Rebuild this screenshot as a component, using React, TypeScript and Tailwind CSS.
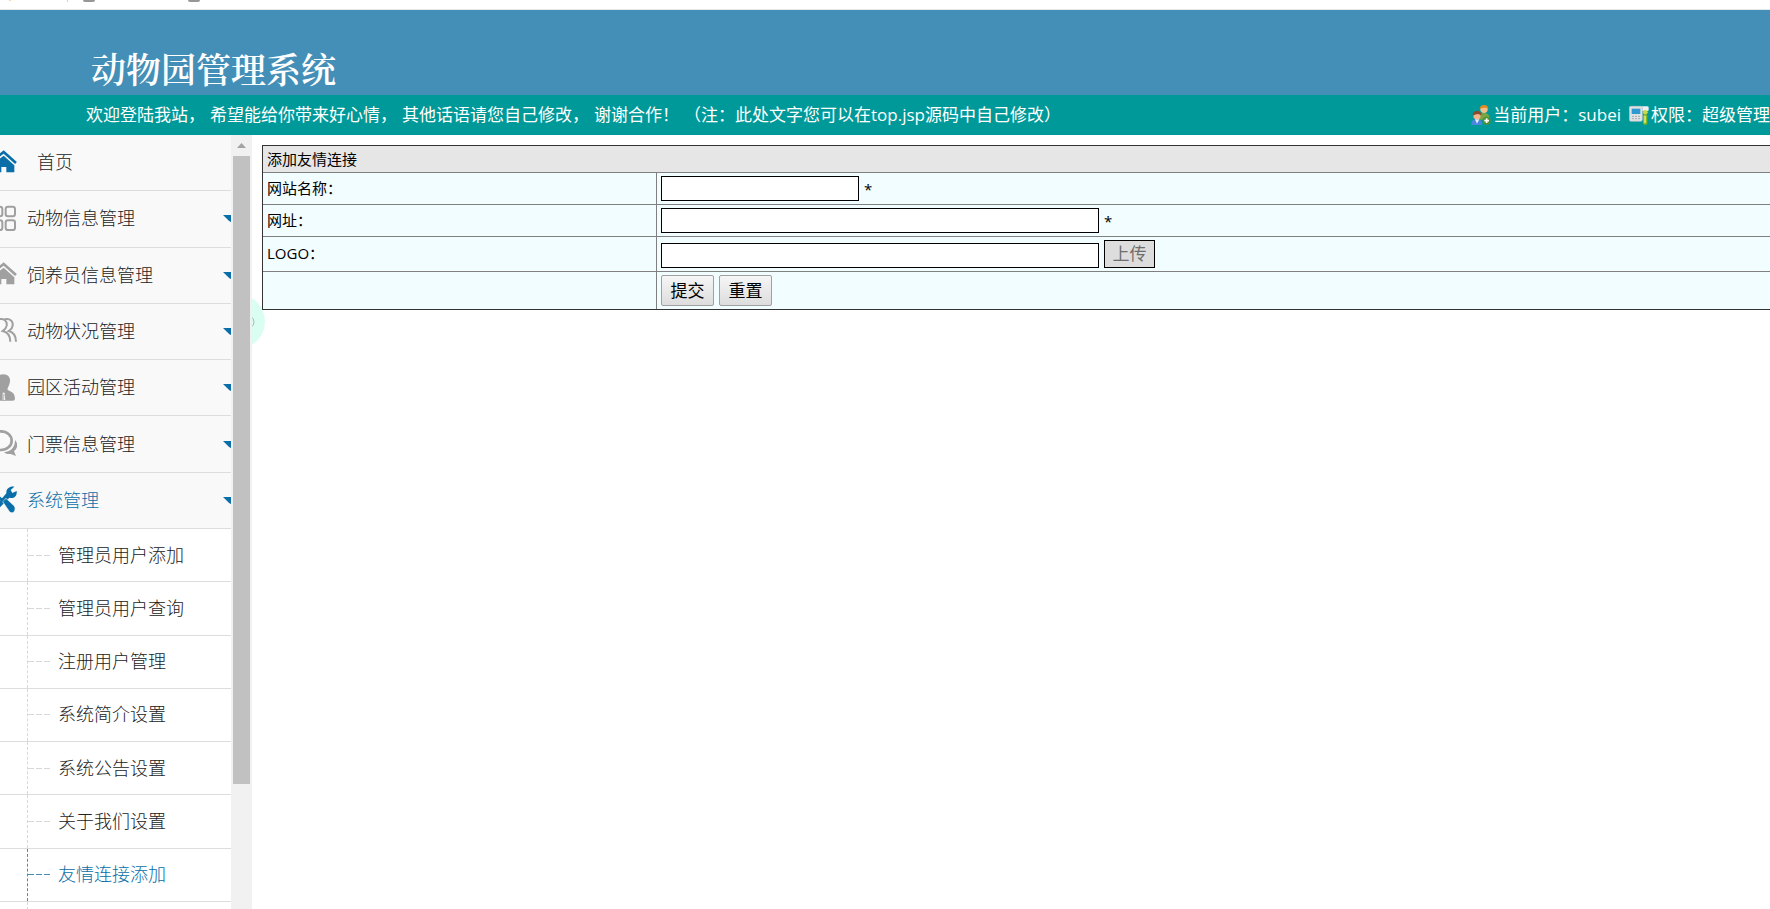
import React from "react";

const HomeIcon = ({ color }: { color: string }) => (
  <svg width="17" height="28" viewBox="0 0 51 84" className="shrink-0" aria-hidden="true">
    <path d="M-3 20L11 9L48 42" fill="none" stroke={color} strokeWidth="8" />
    <path d="M-3 31L11 20L43 49V70H19V54H4V70H-3Z" fill={color} />
  </svg>
);

const GridIcon = () => (
  <svg width="17" height="28" viewBox="0 0 51 84" className="shrink-0" aria-hidden="true">
    <g fill="none" stroke="#a0a0a0" strokeWidth="6">
      <rect x="17" y="5" width="28" height="29" rx="7" />
      <rect x="17" y="46" width="28" height="29" rx="7" />
      <rect x="-21" y="5" width="28" height="29" rx="7" />
      <rect x="-21" y="46" width="28" height="29" rx="7" />
    </g>
  </svg>
);

const PeopleIcon = () => (
  <svg width="17" height="28" viewBox="0 0 51 84" className="shrink-0" aria-hidden="true">
    <g fill="none" stroke="#a0a0a0" strokeWidth="6">
      <path d="M14 7C31 3 40 14 38 26C37 36 31 38 26 42C42 46 48 58 48 74" />
      <path d="M-4 7C12 3 22 12 20 26C18 36 13 38 8 42C25 46 31 58 31 74" />
    </g>
  </svg>
);

const PersonIcon = () => (
  <svg width="17" height="28" viewBox="0 0 51 84" className="shrink-0" aria-hidden="true">
    <path d="M0 2C20 -4 32 8 30 22C29 34 24 38 22 46C26 54 44 50 45 74Q45 80 38 80H0Z" fill="#a0a0a0" />
    <path d="M8 56H14V62L16 78H8Z" fill="#f9f9f9" />
    <path d="M11 60V80" stroke="#a0a0a0" strokeWidth="2" />
  </svg>
);

const ChatIcon = () => (
  <svg width="17" height="28" viewBox="0 0 51 84" className="shrink-0" aria-hidden="true">
    <ellipse cx="3" cy="32" rx="32" ry="28" fill="none" stroke="#a0a0a0" strokeWidth="8" />
    <path d="M45 30C56 42 52 56 42 64L48 78L32 72C22 73 16 71 12 67C34 64 45 52 45 30Z" fill="#a0a0a0" />
  </svg>
);

const ToolsIcon = () => (
  <svg width="17" height="28" viewBox="0 0 51 84" className="shrink-0" aria-hidden="true">
    <g fill="#0a6ea8">
      <path d="M19 22C18 8 29 0 43 2L32 12L37 21L50 15C52 30 41 39 28 35L0 64V44Z" />
      <path d="M8 47L18 37L43 60C50 72 40 86 29 78Z" stroke="#f9f9f9" strokeWidth="2" />
      <path d="M-2 30L12 42L6 46L-2 40Z" />
    </g>
  </svg>
);

const Caret = () => (
  <svg width="8" height="7" viewBox="0 0 24 21" className="ml-auto shrink-0" aria-hidden="true">
    <path d="M0 0H24V21Q18 19 13 13Z" fill="#0a6ea8" />
  </svg>
);

const UsersIcon = () => (
  <svg width="20" height="20" viewBox="0 0 60 60" className="shrink-0" aria-hidden="true">
    <path d="M24 40Q24 24 40 24Q56 24 57 44H24Z" fill="#79a843" />
    <circle cx="39" cy="13" r="11" fill="#f3bf8c" />
    <path d="M26 12Q27 0 39 0Q52 0 52 12Q44 4 26 12Z" fill="#e08a1e" />
    <path d="M1 60Q0 42 18 42Q34 42 34 60Z" fill="#4a86dd" />
    <path d="M12 43L18 56L25 43Z" fill="#e8f0fc" />
    <circle cx="18" cy="32" r="11" fill="#f0b58a" />
    <path d="M5 32Q5 18 18 18Q32 18 31 32Q22 22 5 32Z" fill="#8a4a2c" />
    <circle cx="47" cy="47" r="12" fill="#4f8f35" />
    <path d="M47 40V54M40 47H54" stroke="#fff" strokeWidth="5" />
  </svg>
);

const DeviceIcon = () => (
  <svg width="20" height="20" viewBox="0 0 60 60" className="shrink-0" aria-hidden="true">
    <rect x="1" y="4" width="58" height="14" rx="4" fill="#eef0f2" />
    <rect x="1" y="4" width="39" height="45" rx="5" fill="#dfe2e5" stroke="#b5babf" strokeWidth="2" />
    <rect x="8" y="11" width="26" height="16" fill="#2d9bd0" />
    <path d="M9 34H33M9 41H33" stroke="#a6abb0" strokeWidth="3" strokeDasharray="6 3" />
    <circle cx="49" cy="22" r="7" fill="#c9d84a" />
    <rect x="42" y="28" width="13" height="31" rx="5" fill="#86b71b" />
    <path d="M48 32V54" stroke="#e8f49a" strokeWidth="4" />
  </svg>
);

const sections = [
  { label: "动物信息管理", icon: <GridIcon /> },
  { label: "饲养员信息管理", icon: <HomeIcon color="#a0a0a0" /> },
  { label: "动物状况管理", icon: <PeopleIcon /> },
  { label: "园区活动管理", icon: <PersonIcon /> },
  { label: "门票信息管理", icon: <ChatIcon /> },
  { label: "系统管理", icon: <ToolsIcon />, active: true },
];

const links = [
  { label: "管理员用户添加" },
  { label: "管理员用户查询" },
  { label: "注册用户管理" },
  { label: "系统简介设置" },
  { label: "系统公告设置" },
  { label: "关于我们设置" },
  { label: "友情连接添加", active: true },
];

const notice = [
  "欢迎登陆我站，",
  "希望能给你带来好心情，",
  "其他话语请您自己修改，",
  "谢谢合作！",
  "（注：此处文字您可以在top.jsp源码中自己修改）",
];

function Header() {
  return (
    <header className="shrink-0">
      <div className="flex h-[10px] items-start border-b border-[#e4e8ea] bg-white">
        <span className="ml-[9px] h-px w-[2px] bg-[#ffd9a8]" />
        <span className="ml-[56px] h-[2px] w-px bg-[#d0d0d0]" />
        <span className="ml-[15px] h-[2px] w-3 rounded-b-sm bg-[#979797]" />
        <span className="ml-[93px] h-[2px] w-3 rounded-b-sm bg-[#979797]" />
      </div>
      <div className="flex h-[85px] items-end bg-[#438fb8] pb-1 pl-[91px]">
        <h1 className="font-['Noto_Serif_CJK_SC','Noto_Sans_CJK_SC',serif] text-[35px] leading-[46px] font-semibold text-white">
          动物园管理系统
        </h1>
      </div>
      <div className="flex h-10 items-center justify-between overflow-hidden bg-[#009999] pl-[86px] text-[17px] whitespace-nowrap text-white">
        <p className="flex gap-[5px]">
          {notice.map((part) => (
            <span key={part}>{part}</span>
          ))}
        </p>
        <div className="flex shrink-0 items-center gap-2">
          <span className="flex items-center gap-[2px]">
            <UsersIcon />
            当前用户：subei
          </span>
          <span className="flex items-center gap-[2px]">
            <DeviceIcon />
            权限：超级管理
          </span>
        </div>
      </div>
    </header>
  );
}

function Sidebar() {
  return (
    <aside className="relative z-10 flex w-[252px] shrink-0 overflow-hidden bg-white">
      <nav className="min-w-0 flex-1 text-[18px] font-light text-[#222]">
        <ul className="grid h-[394px] auto-rows-fr bg-[#f9f9f9]">
          <li className="border-b border-[#ddd]">
            <a href="#home" className="flex h-full items-center gap-5">
              <HomeIcon color="#0a6ea8" />
              首页
            </a>
          </li>
          {sections.map((s) => (
            <li key={s.label} className="border-b border-[#ddd]">
              <button
                type="button"
                aria-expanded={!!s.active}
                className={
                  s.active
                    ? "flex h-full w-full items-center gap-[10px] text-left text-[#0a6ea8]"
                    : "flex h-full w-full items-center gap-[10px] text-left"
                }
              >
                {s.icon}
                {s.label}
                <Caret />
              </button>
            </li>
          ))}
        </ul>
        <ul className="grid h-[373px] auto-rows-fr">
          {links.map((l) => (
            <li key={l.label} className="border-b border-[#ddd] pl-[27px]">
              <a
                href="#link"
                className={
                  l.active
                    ? "flex h-full items-center gap-2 border-l border-dashed border-[#438fb8] text-[#0a6ea8]"
                    : "flex h-full items-center gap-2 border-l border-dashed border-[#d8d8d8]"
                }
              >
                <svg
                  width="22"
                  height="1"
                  viewBox="0 0 22 1"
                  className={l.active ? "shrink-0 text-[#438fb8]" : "shrink-0 text-[#d8d8d8]"}
                  aria-hidden="true"
                >
                  <path d="M0 0H6V1H0ZM8 0H14V1H8ZM16 0H22V1H16Z" fill="currentColor" />
                </svg>
                {l.label}
              </a>
            </li>
          ))}
        </ul>
        <div className="ml-[27px] h-[53px] border-l border-dashed border-[#d8d8d8]" />
      </nav>
      <div className="flex w-[21px] flex-col bg-[#f1f1f1] px-[2px]" aria-hidden="true">
        <div className="flex h-[21px] items-center justify-center">
          <svg width="9" height="5" viewBox="0 0 9 5">
            <path d="M4.500 0L9 5H0Z" fill="#a3a3a3" />
          </svg>
        </div>
        <div className="h-[628px] bg-[#c1c1c1]" />
      </div>
    </aside>
  );
}

const labelCell = "w-[394px] border-r border-b border-[#808080] px-1 pb-[2px] text-left font-normal";
const fieldCell = "border-b border-[#808080] px-1";

function LinkForm() {
  return (
    <form className="relative" onSubmit={(e) => e.preventDefault()}>
      <table className="w-full border-separate border-spacing-0 border-y border-l border-[#333] bg-[#f2fdff] text-[15px] leading-5 text-black">
        <thead>
          <tr className="h-[27px] bg-[#e6e6e6]">
            <th colSpan={2} className="border-b border-[#808080] px-1 text-left font-normal">
              添加友情连接
            </th>
          </tr>
        </thead>
        <tbody>
          <tr className="h-8">
            <th scope="row" className={labelCell}>
              <label htmlFor="site-name">网站名称：</label>
            </th>
            <td className={fieldCell}>
              <div className="flex items-center gap-[5px]">
                <input id="site-name" type="text" className="h-[25px] w-[198px] border border-black bg-white px-1" />
                <span>*</span>
              </div>
            </td>
          </tr>
          <tr className="h-8">
            <th scope="row" className={labelCell}>
              <label htmlFor="site-url">网址：</label>
            </th>
            <td className={fieldCell}>
              <div className="flex items-center gap-[5px]">
                <input id="site-url" type="text" className="h-[25px] w-[438px] border border-black bg-white px-1" />
                <span>*</span>
              </div>
            </td>
          </tr>
          <tr className="h-[35px]">
            <th scope="row" className={labelCell}>
              <label htmlFor="site-logo">LOGO：</label>
            </th>
            <td className={fieldCell}>
              <div className="flex items-end gap-[5px]">
                <input id="site-logo" type="text" className="h-[25px] w-[438px] border border-black bg-white px-1" />
                <button
                  type="button"
                  className="h-7 w-[51px] border border-black bg-[#ddd] text-[17px] text-[#6d6d6d]"
                >
                  上传
                </button>
              </div>
            </td>
          </tr>
          <tr className="h-[37px]">
            <td className="border-r border-[#808080]" />
            <td className="px-1">
              <div className="flex gap-[5px] text-[17px]">
                <button
                  type="submit"
                  className="h-[31px] w-[53px] rounded-xs border border-[#a0a0a0] bg-linear-to-b from-[#f6f6f6] to-[#dddddd]"
                >
                  提交
                </button>
                <button
                  type="reset"
                  className="h-[31px] w-[53px] rounded-xs border border-[#a0a0a0] bg-linear-to-b from-[#f6f6f6] to-[#dddddd]"
                >
                  重置
                </button>
              </div>
            </td>
          </tr>
        </tbody>
      </table>
    </form>
  );
}

export default function App() {
  return (
    <div className="flex h-screen flex-col overflow-hidden bg-white font-['Open_Sans','Noto_Sans_CJK_SC',sans-serif]">
      <Header />
      <div className="flex min-h-0 flex-1">
        <Sidebar />
        <main className="relative min-w-0 flex-1 pt-[10px] pl-[10px]">
          <div className="absolute top-[159px] -left-[42px] flex size-[55px] items-center justify-end rounded-full bg-[#dafff2] pr-[10px]">
            <svg width="4" height="12" viewBox="0 0 4 12" aria-hidden="true">
              <path d="M0 1Q3 2 3 6T0 11" fill="none" stroke="#a9bdb5" strokeWidth="1" />
            </svg>
          </div>
          <LinkForm />
        </main>
      </div>
    </div>
  );
}
